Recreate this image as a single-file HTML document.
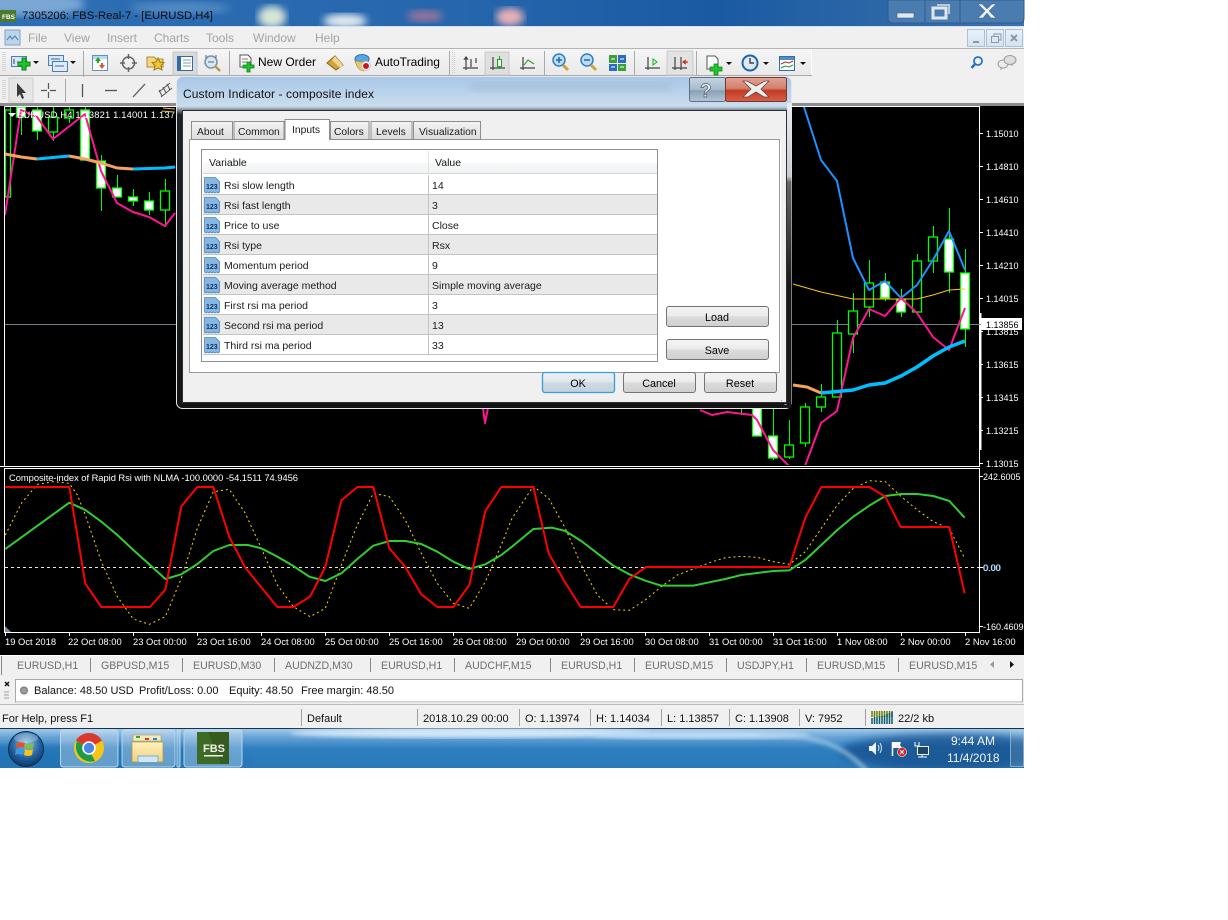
<!DOCTYPE html>
<html>
<head>
<meta charset="utf-8">
<title>Custom Indicator - composite index</title>
<style>
html,body{margin:0;padding:0;background:#fff;width:1228px;height:920px;overflow:hidden}
svg{display:block}
text{font-family:"Liberation Sans",sans-serif;white-space:pre}
.m{font-size:12px;fill:#a3a3a3}
.t{font-size:12px;fill:#000}
.d{font-size:10.500px;fill:#1a1a1a}
.tt{font-size:10.300px;fill:#1a1a1a}
.c{font-size:9px;fill:#fff}
.x{font-size:9.400px;fill:#fff}
.tb{font-size:10.600px;fill:#6e6e6e}
.st{font-size:11px;fill:#111}
.bt{font-size:10.800px;fill:#000;text-anchor:middle}
</style>
</head>
<body>
<svg width="1228" height="920" viewBox="0 0 1228 920" xmlns="http://www.w3.org/2000/svg">
<defs>
<linearGradient id="tbar" x1="0" x2="1" y1="0" y2="0"><stop offset="0" stop-color="#2f6fb4"/><stop offset=".45" stop-color="#2566ad"/><stop offset=".7" stop-color="#1a5aa2"/><stop offset="1" stop-color="#3c72ac"/></linearGradient>
<linearGradient id="task" x1="0" x2="0" y1="0" y2="1"><stop offset="0" stop-color="#a9cdeb"/><stop offset=".22" stop-color="#6aa5d6"/><stop offset=".5" stop-color="#2f7fc0"/><stop offset="1" stop-color="#2a7ab8"/></linearGradient>
<linearGradient id="btn" x1="0" x2="0" y1="0" y2="1"><stop offset="0" stop-color="#f3f3f3"/><stop offset=".48" stop-color="#ebebeb"/><stop offset=".5" stop-color="#dcdcdc"/><stop offset="1" stop-color="#cfcfcf"/></linearGradient>
<linearGradient id="okb" x1="0" x2="0" y1="0" y2="1"><stop offset="0" stop-color="#e9f0f5"/><stop offset=".48" stop-color="#dfe8ef"/><stop offset=".5" stop-color="#cddae4"/><stop offset="1" stop-color="#c2d2de"/></linearGradient>
<linearGradient id="hdr" x1="0" x2="0" y1="0" y2="1"><stop offset="0" stop-color="#fff"/><stop offset=".5" stop-color="#fff"/><stop offset=".55" stop-color="#f6f7f8"/><stop offset="1" stop-color="#f2f3f4"/></linearGradient>
<linearGradient id="tab" x1="0" x2="0" y1="0" y2="1"><stop offset="0" stop-color="#f4f4f4"/><stop offset="1" stop-color="#dcdcdc"/></linearGradient>
<linearGradient id="dlg" x1="0" x2="0" y1="0" y2="1"><stop offset="0" stop-color="#a7c6e6"/><stop offset=".06" stop-color="#bed6ec"/><stop offset=".09" stop-color="#c9dcec"/><stop offset=".105" stop-color="#5f6a72"/><stop offset=".115" stop-color="#1e2226"/><stop offset="1" stop-color="#141414"/></linearGradient>
<linearGradient id="rgl" x1="0" x2="0" y1="0" y2="1"><stop offset="0" stop-color="#e8eef2"/><stop offset=".24" stop-color="#c8ccd0"/><stop offset=".26" stop-color="#666"/><stop offset=".6" stop-color="#181818"/><stop offset="1" stop-color="#181818"/></linearGradient>
<linearGradient id="cls" x1="0" x2="0" y1="0" y2="1"><stop offset="0" stop-color="#e2a294"/><stop offset=".45" stop-color="#d1806f"/><stop offset=".55" stop-color="#c53a22"/><stop offset="1" stop-color="#d9604a"/></linearGradient>
<linearGradient id="hlp" x1="0" x2="0" y1="0" y2="1"><stop offset="0" stop-color="#c4d4e2"/><stop offset=".5" stop-color="#a9bccc"/><stop offset=".55" stop-color="#8ba0b4"/><stop offset="1" stop-color="#b4c6d6"/></linearGradient>
<linearGradient id="mdi" x1="0" x2="0" y1="0" y2="1"><stop offset="0" stop-color="#e8f1f9"/><stop offset="1" stop-color="#d4e4f2"/></linearGradient>
<radialGradient id="orb" cx=".5" cy=".35" r=".7"><stop offset="0" stop-color="#8ec3e8"/><stop offset=".6" stop-color="#1f5f9e"/><stop offset="1" stop-color="#0e2f55"/></radialGradient>
<linearGradient id="fold" x1="0" x2="0" y1="0" y2="1"><stop offset="0" stop-color="#fff3c0"/><stop offset="1" stop-color="#f0cf78"/></linearGradient>
<linearGradient id="tool" x1="0" x2="0" y1="0" y2="1"><stop offset="0" stop-color="#f6f6f6"/><stop offset="1" stop-color="#e9e9e9"/></linearGradient>
<filter id="b4"><feGaussianBlur stdDeviation="4"/></filter>
<filter id="b2"><feGaussianBlur stdDeviation="2"/></filter>
<clipPath id="cm"><rect x="5" y="107" width="974" height="358"/></clipPath>
<clipPath id="cs"><rect x="5" y="469" width="974" height="163"/></clipPath>
<clipPath id="ctop"><rect x="0" y="0" width="1024" height="26"/></clipPath>
<clipPath id="ctask"><rect x="0" y="728" width="1024" height="40"/></clipPath>
<g id="i123"><path d="M.5 1.500h11l4 4v10.500l-1.500 1-1.500-1-1.500 1-1.500-1-1.500 1-1.500-1-1.500 1-1.500-1-1.500 1-1.500-1z" fill="#86b7e3" stroke="#4f86bd" stroke-width=".8"/><text x="2" y="13" style="font-size:7px;font-weight:bold;fill:#123560">123</text></g>
</defs>

<rect width="1228" height="920" fill="#fff"/>

<!-- app background -->
<rect x="0" y="0" width="1024" height="768" fill="#f0f0f0"/>

<!-- title bar -->
<rect x="0" y="0" width="1024" height="27" fill="url(#tbar)"/>
<g clip-path="url(#ctop)">
<ellipse cx="30" cy="4" rx="55" ry="12" fill="#8fb6de" filter="url(#b4)" opacity=".8"/>
<ellipse cx="272" cy="17" rx="14" ry="11" fill="#d8e6d8" filter="url(#b4)"/>
<ellipse cx="345" cy="21" rx="22" ry="7" fill="#e4ecf0" filter="url(#b4)"/>
<ellipse cx="425" cy="16" rx="18" ry="6" fill="#c67a96" filter="url(#b4)" opacity=".7"/>
<ellipse cx="510" cy="17" rx="14" ry="9" fill="#e8b0b8" filter="url(#b4)"/>
<ellipse cx="180" cy="8" rx="50" ry="6" fill="#6fa0d0" filter="url(#b4)" opacity=".6"/>
</g>
<rect x="0" y="26" width="1024" height="1.500" fill="#cfe0ee"/>
<rect x="0" y="10" width="16" height="12" fill="#4a7a30"/>
<text x="2" y="19" style="font-size:6.500px;font-weight:bold;fill:#fff">FBS</text>
<text x="22" y="19" style="font-size:11.300px;fill:#0b0b0b">7305206: FBS-Real-7 - [EURUSD,H4]</text>
<!-- window caption buttons -->
<path d="M888 0v18q0 5 5 5h126q5 0 5-5V0z" fill="#4a7caf" stroke="#2d5d90"/>
<path d="M925 0v23M960 0v23" stroke="#2d5d90"/>
<rect x="897" y="13" width="17" height="5" fill="#e4e8ec" stroke="#3a5f88" stroke-width=".6"/>
<rect x="933" y="8" width="13" height="10" fill="none" stroke="#dfe6ec" stroke-width="3"/>
<path d="M937 5h12v9" fill="none" stroke="#b8c8d8" stroke-width="2"/>
<path d="M982 4l5 5 5-5h4l-7 7 7 7h-5l-4-5-4 5h-5l7-7-7-7z" fill="#eef1f4" stroke="#34618f" stroke-width=".5"/>

<!-- menu -->
<rect x="0" y="27" width="1024" height="21" fill="#f0f0f0"/>
<rect x="5" y="30" width="15" height="15" fill="#bcd3ea" stroke="#7ea4c8"/>
<path d="M7 40l3-4 2 3 3-3 3 4" fill="none" stroke="#4a78a8"/>
<text class="m" x="28" y="42">File</text><text class="m" x="64" y="42">View</text><text class="m" x="107" y="42">Insert</text><text class="m" x="154" y="42">Charts</text><text class="m" x="206" y="42">Tools</text><text class="m" x="253" y="42">Window</text><text class="m" x="315" y="42">Help</text>
<g stroke="#a9c1d8" fill="url(#mdi)"><rect x="967.500" y="29.500" width="17" height="17"/><rect x="986.500" y="29.500" width="17" height="17"/><rect x="1005.500" y="29.500" width="17" height="17"/></g>
<path d="M973 42h6" stroke="#8a98a8" stroke-width="2"/>
<path d="M991.500 36.500h7v6h-7zM994 36v-2h7v6h-2" fill="none" stroke="#8a98a8"/>
<path d="M1011 35l6 6M1017 35l-6 6" stroke="#8a98a8" stroke-width="2"/>
<rect x="0" y="48" width="1024" height="1" fill="#b4b4b4"/>

<!-- toolbars -->
<rect x="0" y="49" width="812" height="26" fill="url(#tool)"/>
<path d="M811.500 49v26.500H0" fill="none" stroke="#fff"/>
<rect x="0" y="75" width="812" height="1" fill="#aaa"/>
<rect x="0" y="76" width="180" height="28" fill="#efefef"/>
<rect x="780" y="76" width="244" height="28" fill="#f0f0f0"/>
<rect x="0" y="103" width="1024" height="3" fill="#8d8d8d"/>
<path d="M3 52v20M5 52v20" stroke="#bbb" stroke-dasharray="1 1"/>
<path d="M3 80v20M5 80v20" stroke="#bbb" stroke-dasharray="1 1"/>

<!-- toolbar 1 icons -->
<rect x="11.500" y="56.500" width="15" height="10" fill="#d6e6f4" stroke="#4a7fb0"/>
<path d="M14 59v5M17 62h6" stroke="#345" />
<path d="M22 58h4v4h4v4h-4v4h-4v-4h-4v-4h4z" fill="#1fc62a" stroke="#0d7a18"/>
<path d="M33 61h6l-3 3z" fill="#111"/>
<rect x="48.500" y="55.500" width="15" height="10" fill="#d6e6f4" stroke="#4a7fb0"/>
<rect x="52.500" y="61.500" width="15" height="10" fill="#dcebf7" stroke="#4a7fb0"/>
<path d="M51 59h9M55 66h9" stroke="#567"/>
<path d="M70 61h6l-3 3z" fill="#111"/>
<path d="M83.500 51v26" stroke="#aaa"/>
<rect x="92.500" y="55.500" width="15" height="15" fill="#fff" stroke="#5d93c4"/>
<rect x="93" y="56" width="14" height="3" fill="#bcd7ee"/>
<path d="M95 61l3-4 3 4h-2v2h-2v-2z" fill="#1bab22"/>
<path d="M99 65l3 4 3-4h-2v-2h-2v2z" fill="#dd5530"/>
<circle cx="128.500" cy="63" r="6" fill="none" stroke="#666" stroke-width="1.500"/>
<path d="M128.500 54v5M128.500 67v5M120 63h5M132 63h5" stroke="#666" stroke-width="1.500"/>
<path d="M147 57h7l2 2h7v8h-16z" fill="#f6d67c" stroke="#b08a38"/>
<path d="M158 58l2 4 4 .5-3 3 1 4.500-4-2-4 2 1-4.500-3-3 4-.5z" fill="#f2c531" stroke="#a07a16"/>
<rect x="173" y="52" width="24" height="23" fill="#dadada" stroke="#c6c6c6"/>
<rect x="177.500" y="56.500" width="15" height="14" fill="#fff" stroke="#2e6da8"/>
<rect x="177" y="56" width="4" height="15" fill="#2e6da8"/>
<path d="M183 60h8M183 63h8M183 66h8" stroke="#7aa0c4"/>
<circle cx="211" cy="62" r="6" fill="#d8e6f2" stroke="#7590aa" stroke-width="1.500"/>
<path d="M206 58v-3M216 58v-3M208 62h6" stroke="#567"/>
<path d="M215 66l5 5" stroke="#b89a40" stroke-width="2.500"/>
<path d="M229.500 51v26" stroke="#aaa"/>
<path d="M240 55h8l3 3v9h-11z" fill="#fff" stroke="#555"/>
<path d="M242 59h6M242 62h6" stroke="#777"/>
<path d="M247 62h3v3h4v3h-4v4h-3v-4h-4v-3h4z" fill="#1fc62a" stroke="#0d7a18" stroke-width=".8"/>
<text class="t" x="258" y="66">New Order</text>
<path d="M327 63l8-7 8 9-7 5z" fill="#d3a03a" stroke="#8b6414"/>
<path d="M335 56l8 9-3 3-8-8z" fill="#f0d590"/>
<ellipse cx="362" cy="59" rx="7" ry="4.500" fill="#5ba6de" stroke="#2b6ea8"/>
<path d="M355 61c2 6 4 10 9 10l4-8z" fill="#e8c76a" stroke="#a88a30" stroke-width=".6"/>
<circle cx="366" cy="66" r="4.500" fill="#fff" stroke="#c9c9c9"/>
<circle cx="366" cy="66" r="3" fill="#d41414"/>
<text class="t" x="375" y="66">AutoTrading</text>
<path d="M449.500 51v26" stroke="#aaa"/>
<path d="M452.500 52v22M454.500 52v22" stroke="#ccc" stroke-dasharray="1 1"/>
<g fill="none" stroke="#444" stroke-width="1.200">
<path d="M466 57v13M463 68h15M471 59v8M476 58v5"/>
<path d="M466 57l-1.500 2h3z" fill="#444"/>
</g>
<rect x="485" y="52" width="24" height="23" fill="#dfdfdf" stroke="#c8c8c8"/>
<path d="M493 57v13M490 68h15" stroke="#444" stroke-width="1.200" fill="none"/>
<rect x="497.500" y="59.500" width="4" height="7" fill="#fff" stroke="#12a81a"/>
<path d="M499.500 56v3M499.500 66v3" stroke="#12a81a"/>
<g fill="none" stroke="#444" stroke-width="1.200"><path d="M523 57v13M520 68h15"/></g>
<path d="M524 65l4-5 3 2 3 2" fill="none" stroke="#3a9a40" stroke-width="1.200"/>
<path d="M544.500 51v26" stroke="#aaa"/>
<circle cx="559" cy="60" r="6" fill="#bcdcf2" stroke="#2f80c0" stroke-width="1.500"/>
<path d="M556 60h6M559 57v6" stroke="#1f66a8" stroke-width="1.500"/>
<path d="M563 65l5 5" stroke="#c9a63c" stroke-width="3"/>
<circle cx="587" cy="60" r="6" fill="#bcdcf2" stroke="#2f80c0" stroke-width="1.500"/>
<path d="M584 60h6" stroke="#1f66a8" stroke-width="1.500"/>
<path d="M591 65l5 5" stroke="#c9a63c" stroke-width="3"/>
<rect x="609" y="55" width="8" height="8" fill="#3ba035"/><rect x="618" y="55" width="8" height="8" fill="#2a6cc4"/>
<rect x="609" y="64" width="8" height="7" fill="#2a6cc4"/><rect x="618" y="64" width="8" height="7" fill="#3ba035"/>
<path d="M611 59h4M620 59h4M611 67h4M620 67h4" stroke="#fff"/>
<path d="M634.500 51v26" stroke="#aaa"/>
<path d="M648 57v13M645 68h15" stroke="#444" stroke-width="1.200" fill="none"/>
<path d="M653 59l4 3-4 3z" fill="none" stroke="#15b020"/>
<rect x="667" y="51" width="26" height="24" fill="#e2e2e2" stroke="#c8c8c8"/>
<path d="M675 57v13M672 68h15M681 57v13" stroke="#444" stroke-width="1.200" fill="none"/>
<path d="M683 62h5M686 60l-3 2 3 2" fill="none" stroke="#c92a18" stroke-width="1.200"/>
<path d="M696.500 51v26" stroke="#aaa"/>
<path d="M707 56h8l3 3v10h-11z" fill="#fff" stroke="#555"/>
<path d="M714 64h4v3h4v4h-4v4h-4v-4h-4v-4h4z" fill="#1fc62a" stroke="#0d7a18" stroke-width=".7"/>
<path d="M726 62h6l-3 3z" fill="#111"/>
<circle cx="750" cy="63" r="7.500" fill="#dfe9f2" stroke="#1d64ab" stroke-width="2"/>
<path d="M750 58v5h4" fill="none" stroke="#223" stroke-width="1.200"/>
<path d="M763 62h6l-3 3z" fill="#111"/>
<rect x="779.500" y="56.500" width="15" height="14" fill="#f8fbfd" stroke="#2e6da8"/>
<rect x="780" y="57" width="14" height="3" fill="#4f8ecb"/>
<path d="M781 64l4-2 4 1 4-2" fill="none" stroke="#b03020"/>
<path d="M781 68l4-2 4 1 4-2" fill="none" stroke="#2a9a30"/>
<path d="M800 62h6l-3 3z" fill="#111"/>
<circle cx="978" cy="61" r="4" fill="none" stroke="#2a72c4" stroke-width="1.800"/>
<path d="M975 64l-3.500 4" stroke="#2a72c4" stroke-width="2.500"/>
<ellipse cx="1003" cy="64" rx="5" ry="4" fill="#eee" stroke="#9a9a9a"/>
<ellipse cx="1010" cy="60" rx="6" ry="4.500" fill="#ddd" stroke="#9a9a9a"/>
<path d="M1001 68v2M1012 64v2" stroke="#9a9a9a"/>

<!-- toolbar 2 -->
<rect x="9" y="78" width="24" height="24" fill="#e6e6e6" stroke="#cfcfcf"/>
<path d="M17 83v14l3-3 2 5 2-1-2-5h4z" fill="#3a3a3a"/>
<path d="M48.500 83v6M48.500 92v6M41 90.500h6M50 90.500h6" stroke="#555" stroke-width="1.200"/>
<path d="M65.500 79v23" stroke="#aaa"/>
<path d="M82.500 84v13" stroke="#555" stroke-width="1.300"/>
<path d="M105 90.500h12" stroke="#555" stroke-width="1.300"/>
<path d="M133 97l12-13" stroke="#666" stroke-width="1.300"/>
<path d="M159 92l11-9M161 97l11-9M162 96l-3-6M166 93l-3-6M170 90l-3-6" stroke="#555" stroke-width="1"/>

<!-- chart background -->
<rect x="0" y="106" width="1024" height="549" fill="#000"/>
<path d="M4.500 106.500h975v360M4.500 106.500v360" fill="none" stroke="#fff"/>
<path d="M0 466.500h980M4 468.500h976" stroke="#fff"/>
<path d="M4.500 468v164.500h975V468" fill="none" stroke="#fff"/>

<!-- main chart -->
<g clip-path="url(#cm)">
<path d="M5 324.500h974" stroke="#6e7d8c"/>
<path shape-rendering="crispEdges" stroke="#00ff00" fill="none" d="M10.500 107v90M21.500 107v28M37.500 107v33M53.500 107v34M69.500 107v16M85.500 107v3M101.500 155v56M117.500 175v22M133.500 189v17M149.500 192v23M165.500 179v48M741.500 395v20M757.500 400v10M773.500 400v60M789.500 420v39M805.500 403v44M821.500 384v28M837.500 320v77M853.500 293v60M869.500 260v57M885.500 273v28M901.500 289v28M917.500 254v58M933.500 226v47M949.500 208v85M965.500 249v98"/>
<g stroke="#00ff00" stroke-width="1.300" fill="#000">
<rect x="5.500" y="110" width="5" height="87"/>
<rect x="16.500" y="107" width="9" height="10" fill="#fff"/>
<rect x="32.500" y="110" width="9" height="21" fill="#fff"/>
<rect x="48.500" y="117" width="9" height="15"/>
<rect x="64.500" y="110" width="9" height="8"/>
<rect x="80.500" y="110" width="9" height="50" fill="#fff"/>
<rect x="96.500" y="161" width="9" height="27" fill="#fff"/>
<rect x="112.500" y="188" width="9" height="9" fill="#fff"/>
<rect x="128.500" y="197" width="9" height="4" fill="#fff"/>
<rect x="144.500" y="201" width="9" height="9" fill="#fff"/>
<rect x="160.500" y="191" width="9" height="19"/>
<rect x="752.500" y="408" width="9" height="28" fill="#fff"/>
<rect x="768.500" y="436" width="9" height="22" fill="#fff"/>
<rect x="784.500" y="445" width="9" height="12"/>
<rect x="800.500" y="407" width="9" height="36"/>
<rect x="816.500" y="397" width="9" height="10"/>
<rect x="832.500" y="333" width="9" height="64"/>
<rect x="848.500" y="311" width="9" height="23"/>
<rect x="864.500" y="283" width="9" height="24"/>
<rect x="880.500" y="282" width="9" height="16" fill="#fff"/>
<rect x="896.500" y="299" width="9" height="13" fill="#fff"/>
<rect x="912.500" y="261" width="9" height="51"/>
<rect x="928.500" y="237" width="9" height="24"/>
<rect x="944.500" y="239" width="9" height="33" fill="#fff"/>
<rect x="960.500" y="273" width="9" height="56" fill="#fff"/>
</g>
<g fill="none" stroke-linejoin="round">
<polyline points="793,284 821,292 853,299 901,299 917,299 933,295 949,290 965,289" stroke="#ffc800"/>
<polyline points="804,107 821,160 837,181 853,258 869,290 885,281 901,298 917,285 933,260 949,231 965,270" stroke="#1e90ff" stroke-width="2"/>
<polyline points="5,215 21,110 37,117 53,139 85,114 101,171 117,203 133,212 149,217 165,226 175,213" stroke="#ff1493" stroke-width="2"/>
<polyline points="483,408 485,423 488,408" stroke="#ff1493" stroke-width="2"/>
<polyline points="700,410 712,415 727,412 752,415 757,420 773,450 789,466" stroke="#ff1493" stroke-width="2"/>
<polyline points="805,466 821,423 837,411 853,338 869,309 885,316 901,298 917,313 933,337 949,350 965,308" stroke="#ff1493" stroke-width="2"/>
<polyline points="5,154 21,157 37,159" stroke="#f4a460" stroke-width="3"/>
<polyline points="37,159 69,156" stroke="#00bfff" stroke-width="3"/>
<polyline points="69,156 85,159 101,163 117,168 133,169" stroke="#f4a460" stroke-width="3"/>
<polyline points="133,169 165,168 175,167" stroke="#00bfff" stroke-width="3"/>
<polyline points="793,385 807,387 821,393" stroke="#f4a460" stroke-width="3"/>
<polyline points="821,393 853,390 869,385 885,383 901,376 917,367 933,356 949,347 965,341" stroke="#00bfff" stroke-width="3.500"/>
</g>
</g>
<path d="M8 113h8l-4 4z" fill="#fff"/>
<text class="x" x="17" y="118" textLength="158">EURUSD,H4 1.13821 1.14001 1.137</text>
<path d="M162 111l12 1M163 108l12 1" stroke="#e8c040"/>

<!-- price axis -->
<rect x="979" y="313" width="2.500" height="137" fill="#fff"/>
<path d="M980 133.500h3M980 166.500h3M980 199.500h3M980 232.500h3M980 265.500h3M980 298.500h3M980 331.500h3M980 364.500h3M980 397.500h3M980 430.500h3M980 463.500h3" stroke="#fff"/>
<g>
<text class="c" x="986" y="137">1.15010</text><text class="c" x="986" y="170">1.14810</text><text class="c" x="986" y="203">1.14610</text><text class="c" x="986" y="236">1.14410</text><text class="c" x="986" y="269">1.14210</text><text class="c" x="986" y="302">1.14015</text><text class="c" x="986" y="335">1.13815</text><text class="c" x="986" y="368">1.13615</text><text class="c" x="986" y="401">1.13415</text><text class="c" x="986" y="434">1.13215</text><text class="c" x="986" y="467">1.13015</text>
</g>
<rect x="981" y="318" width="41" height="12" fill="#fff"/>
<text x="986" y="328" style="font-size:9px;fill:#000">1.13856</text>
<path d="M978 324.500h3" stroke="#7a8a9a"/>

<!-- sub chart -->
<path d="M5 567.500h974" stroke="#e8e8e8" stroke-dasharray="3 3"/>
<g clip-path="url(#cs)">
<g transform="translate(0,465) scale(.33333)" fill="none" stroke-linejoin="round">
<polyline stroke="#ffd700" stroke-width="3" stroke-dasharray="6 9" points="16,210 64,115 112,58 160,50 208,55 232,90 256,150 304,290 352,395 400,462 448,478 496,455 544,340 592,190 640,80 688,73 736,145 784,250 832,360 880,425 930,455 976,430 1024,300 1072,180 1120,85 1168,95 1216,165 1264,265 1312,355 1360,415 1408,430 1456,350 1504,240 1536,160 1600,64 1646,100 1696,190 1744,300 1792,390 1840,434 1888,436 1936,405 1984,365 2032,330 2080,312 2128,293 2176,278 2224,274 2272,277 2320,290 2368,298 2416,260 2464,190 2512,120 2560,70 2608,47 2656,50 2704,95 2752,135 2800,170 2848,190 2894,280"/>
<polyline stroke="#32cd32" stroke-width="6" points="16,252 208,113 256,135 304,170 352,210 400,255 448,298 496,342 544,328 592,297 640,258 688,240 744,240 784,250 832,275 880,303 928,335 976,348 1024,325 1072,282 1120,242 1168,228 1216,228 1264,237 1312,260 1360,290 1408,312 1456,298 1504,270 1536,245 1600,192 1656,188 1696,198 1744,228 1792,265 1840,302 1888,328 1936,347 1984,362 2080,362 2128,352 2176,342 2224,330 2272,324 2320,318 2368,316 2416,285 2464,240 2512,195 2560,155 2608,122 2656,93 2704,87 2752,87 2800,93 2848,108 2894,158"/>
<polyline stroke="#ff0000" stroke-width="6" points="16,66 208,66 256,356 304,426 450,426 496,374 544,124 592,66 640,66 688,216 736,308 832,426 880,426 930,395 976,306 1024,106 1072,66 1120,66 1168,250 1216,306 1264,388 1312,426 1360,426 1408,360 1456,138 1504,66 1600,66 1646,265 1694,350 1742,426 1840,426 1888,342 1938,306 2368,306 2416,158 2464,66 2608,66 2656,95 2702,186 2848,186 2894,385"/>
</g>
</g>
<text class="x" x="9" y="481" textLength="289">Composite-index of Rapid Rsi with NLMA -100.0000 -54.1511 74.9456</text>
<path d="M5 626l6 6H5z" fill="#7a8a9c"/>
<path d="M980 476.500h3M980 567.500h3M980 626.500h3" stroke="#fff"/>
<text class="c" x="983" y="480">242.6005</text>
<text x="983.700" y="571" style="font-size:9px;fill:#2a7fd4">0.00</text>
<text class="c" x="983" y="571">0.00</text>
<text class="c" x="983" y="630">-160.4609</text>
<path d="M5.500 633v3M69.500 633v3M133.500 633v3M197.500 633v3M261.500 633v3M325.500 633v3M389.500 633v3M453.500 633v3M517.500 633v3M581.500 633v3M645.500 633v3M709.500 633v3M773.500 633v3M837.500 633v3M901.500 633v3M965.500 633v3" stroke="#fff"/>
<g>
<text class="x" x="5" y="645">19 Oct 2018</text><text class="x" x="68" y="645">22 Oct 08:00</text><text class="x" x="133" y="645">23 Oct 00:00</text><text class="x" x="197" y="645">23 Oct 16:00</text><text class="x" x="261" y="645">24 Oct 08:00</text><text class="x" x="325" y="645">25 Oct 00:00</text><text class="x" x="389" y="645">25 Oct 16:00</text><text class="x" x="453" y="645">26 Oct 08:00</text><text class="x" x="516" y="645">29 Oct 00:00</text><text class="x" x="580" y="645">29 Oct 16:00</text><text class="x" x="645" y="645">30 Oct 08:00</text><text class="x" x="709" y="645">31 Oct 00:00</text><text class="x" x="773" y="645">31 Oct 16:00</text><text class="x" x="837" y="645">1 Nov 08:00</text><text class="x" x="900" y="645">2 Nov 00:00</text><text class="x" x="965" y="645">2 Nov 16:00</text>
</g>

<!-- tabs bar -->
<rect x="0" y="655" width="1024" height="21" fill="#f0f0f0"/>
<path d="M0 655.500h991" stroke="#fff"/>
<path d="M1.500 656v19" stroke="#888"/>
<path d="M90.500 658v14M182.500 658v14M274.500 658v14M370.500 658v14M454.500 658v14M550.500 658v14M634.500 658v14M726.500 658v14M806.500 658v14M898.500 658v14" stroke="#888"/>
<text class="tb" x="17" y="669">EURUSD,H1</text><text class="tb" x="101" y="669">GBPUSD,M15</text><text class="tb" x="193" y="669">EURUSD,M30</text><text class="tb" x="285" y="669">AUDNZD,M30</text><text class="tb" x="381" y="669">EURUSD,H1</text><text class="tb" x="465" y="669">AUDCHF,M15</text><text class="tb" x="561" y="669">EURUSD,H1</text><text class="tb" x="645" y="669">EURUSD,M15</text><text class="tb" x="737" y="669">USDJPY,H1</text><text class="tb" x="817" y="669">EURUSD,M15</text><text class="tb" x="909" y="669">EURUSD,M15</text>
<path d="M994 661v7l-4-3.500z" fill="#999"/>
<path d="M1010 661v7l4-3.500z" fill="#111"/>
<rect x="0" y="675" width="1024" height="30" fill="#f0f0f0"/>

<!-- terminal -->
<rect x="15.500" y="679.500" width="1007" height="22.500" fill="#fff" stroke="#a8a8a8"/>
<path d="M16 702.500h1007" stroke="#dcdcdc"/>
<path d="M5 682l4 4M9 682l-4 4" stroke="#111" stroke-width="1.500"/>
<path d="M4 692h5M4 695h5M4 698h5" stroke="#a0a0a0"/>
<circle cx="24" cy="690.500" r="3.500" fill="#9a9a9a" stroke="#777"/>
<text class="st" x="34" y="694">Balance: 48.50 USD</text><text class="st" x="139" y="694">Profit/Loss: 0.00</text><text class="st" x="229" y="694">Equity: 48.50</text><text class="st" x="301" y="694">Free margin: 48.50</text>

<!-- status -->
<rect x="0" y="704" width="1024" height="24" fill="#f0f0f0"/>
<path d="M0 704.500h1024" stroke="#bdbdbd"/>
<path d="M301.500 709v17M417.500 709v17M519.500 709v17M590.500 709v17M661.500 709v17M729.500 709v17M799.500 709v17M865.500 709v17" stroke="#a0a0a0"/>
<text class="st" x="2" y="722">For Help, press F1</text><text class="st" x="307" y="722">Default</text><text class="st" x="423" y="722">2018.10.29 00:00</text><text class="st" x="525" y="722">O: 1.13974</text><text class="st" x="596" y="722">H: 1.14034</text><text class="st" x="667" y="722">L: 1.13857</text><text class="st" x="735" y="722">C: 1.13908</text><text class="st" x="805" y="722">V: 7952</text><text class="st" x="898" y="722">22/2 kb</text>
<g stroke-width="1.500">
<path d="M872 711v6M874.500 711v6M877 711v6M879.500 711v6M882 711v6M884.500 711v6M887 711v6M889.500 711v6M892 711v6" stroke="#6b7d0a"/>
<path d="M872 718v6M874.500 717v7M877 717v7M879.500 716v8M882 716v8M884.500 715v9M887 714v10M889.500 713v11M892 712v12" stroke="#0b5a6e"/>
</g>

<!-- taskbar -->
<rect x="0" y="728" width="1024" height="40" fill="url(#task)"/>
<rect x="0" y="728" width="1024" height="1" fill="#16324e"/>
<g clip-path="url(#ctask)">
<ellipse cx="0" cy="760" rx="250" ry="14" fill="#1e70b0" filter="url(#b4)" opacity=".6"/>
<ellipse cx="470" cy="733" rx="180" ry="5" fill="#d2e6f8" filter="url(#b2)"/>
<ellipse cx="700" cy="735" rx="110" ry="4" fill="#c0dcf4" filter="url(#b2)"/>
<ellipse cx="950" cy="752" rx="110" ry="18" fill="#14508c" filter="url(#b4)" opacity=".75"/>
<path d="M760 735c60-3 90 15 110 40" stroke="#a8cce8" stroke-width="3" fill="none" filter="url(#b2)"/>
</g>
<circle cx="26" cy="749" r="17.500" fill="url(#orb)" stroke="#0f2f50"/>
<path d="M17 743q4-2 8 0l-1 5q-4-2-8 0z" fill="#e8522a"/>
<path d="M26 743q4 2 8 0l-1 5q-4 2-8 0z" fill="#7cc142"/>
<path d="M16 749q4-2 8 0l-1 6q-4-2-8 0z" fill="#3b9ae0"/>
<path d="M25 749q4 2 8 0l-1 6q-4 2-8 0z" fill="#f6c21c"/>
<ellipse cx="26" cy="738" rx="12" ry="5" fill="#fff" opacity=".25"/>
<g stroke="#b6d8ee" fill="#fff" fill-opacity=".3">
<rect x="60.500" y="729.500" width="57.500" height="37.500" rx="3"/>
<rect x="122" y="729.500" width="53" height="37.500" rx="3"/>
<rect x="177" y="729.500" width="3" height="37.500" rx="1"/>
<rect x="184" y="729.500" width="58" height="37.500" rx="3"/>
</g>
<circle cx="89" cy="748" r="15" fill="#f5c518"/>
<path d="M89 748L76 740.500A15 15 0 0 1 102 740.500z" fill="#d93a2f"/>
<path d="M77 741l11 7 7 13a15 15 0 0 1-18 -20z" fill="#1c9b48"/>
<circle cx="89" cy="748" r="6.800" fill="#fff"/>
<circle cx="89" cy="748" r="5.200" fill="#4a88e8"/>
<rect x="133" y="735" width="28" height="6" fill="#f4e9b8" stroke="#b89a50" stroke-width=".6"/>
<rect x="136" y="736" width="4" height="2" fill="#2ba838"/><rect x="145" y="738" width="4" height="2" fill="#d33a28"/><rect x="153" y="738" width="4" height="2" fill="#2a80d8"/>
<path d="M132 742h31v20h-31z" fill="url(#fold)" stroke="#b4964c" stroke-width=".8"/>
<path d="M138 762v-6h20v6" fill="#cfe6f6" stroke="#7ab0d8"/>
<rect x="197" y="732" width="32" height="32" fill="#3f6a25"/>
<path d="M208 732h21v32h-8z" fill="#2f521a" opacity=".6"/>
<text x="203" y="752" style="font-size:11px;font-weight:bold;fill:#f2f2ea">FBS</text>
<rect x="204" y="755" width="19" height="1.500" fill="#f2f2ea"/>
<path d="M869 746h3l4-4v13l-4-4h-3z" fill="#eef3f8"/>
<path d="M878 745q2 3 0 6M880 743q3 5 0 10" fill="none" stroke="#dce8f2"/>
<path d="M892.500 742v14" stroke="#fff" stroke-width="1.500"/>
<path d="M893 742h8l-1 3 2 3h-9z" fill="#fff"/>
<circle cx="902" cy="752" r="4.500" fill="#d82020" stroke="#fff" stroke-width=".6"/>
<path d="M900 750l4 4M904 750l-4 4" stroke="#fff"/>
<rect x="917.500" y="746.500" width="11" height="8" fill="#224466" stroke="#f0f4f8"/>
<path d="M915 742v4h4v-4M922 755v2M918 757h9" fill="none" stroke="#fff"/>
<text x="951" y="745" style="font-size:12px;fill:#f2f6fa">9:44 AM</text>
<text x="947" y="762" style="font-size:12px;fill:#f2f6fa">11/4/2018</text>
<rect x="1010.500" y="729.500" width="13" height="37" fill="#fff" fill-opacity=".12" stroke="#a8c4dc" stroke-opacity=".7"/>

<!-- dialog -->
<rect x="176.500" y="76.500" width="615" height="332" rx="6" fill="url(#dlg)" stroke="#e4e8ec"/>
<rect x="787" y="103" width="4.500" height="305" fill="url(#rgl)"/>
<g filter="url(#b4)" opacity=".18">
<rect x="470" y="82" width="200" height="10" fill="#7d90a4"/>
</g>
<text x="183" y="98" style="font-size:12px;fill:#111" textLength="191">Custom Indicator - composite index</text>
<rect x="689.500" y="77.500" width="36" height="24" rx="2" fill="url(#hlp)" stroke="#5f6f80"/>
<rect x="725.500" y="77.500" width="61" height="24" rx="2" fill="url(#cls)" stroke="#6b3a30"/>
<text x="700" y="97" style="font-size:19px;font-weight:bold;fill:#eef2f6;stroke:#4a5a6a;stroke-width:.7">?</text>
<path d="M747 81l9 5 9-5h4l-8 8 8 8h-5l-8-5-8 5h-5l8-8-8-8z" fill="#eee" stroke="#6a4a40" stroke-width=".8"/>
<rect x="182.500" y="110.500" width="604" height="292" fill="#f0f0f0" stroke="#2f2f2f"/>
<path d="M784.500 404.500h2M781 400.500h1" stroke="#aaa"/>
<rect x="189.500" y="139.500" width="590" height="233" fill="#fff" stroke="#9a9a9a"/>
<path d="M780.500 140v233" stroke="#fff"/>
<g stroke="#8e8e8e" fill="url(#tab)">
<rect x="191.500" y="121.500" width="41" height="18"/>
<rect x="234" y="121.500" width="50" height="18"/>
<rect x="330.500" y="121.500" width="38.500" height="18"/>
<rect x="371" y="121.500" width="41" height="18"/>
<rect x="413.500" y="121.500" width="67" height="18"/>
</g>
<path d="M285 140v-20.500h44.500V140" fill="#fff" stroke="#8e8e8e"/>
<rect x="285.500" y="139" width="43.500" height="2" fill="#fff"/>
<text class="tt" x="197" y="135">About</text><text class="tt" x="238" y="135">Common</text><text class="tt" x="292" y="133">Inputs</text><text class="tt" x="334" y="135">Colors</text><text class="tt" x="376" y="135">Levels</text><text class="tt" x="419" y="135">Visualization</text>

<!-- table -->
<rect x="201.500" y="149.500" width="456" height="212" fill="#fff" stroke="#8f8f8f"/>
<rect x="203" y="151" width="454" height="23" fill="url(#hdr)"/>
<path d="M203 173.500h454" stroke="#d6d6d6"/>
<path d="M428.500 151v23" stroke="#e2e2e2"/>
<text class="d" x="209" y="166">Variable</text><text class="d" x="435" y="166">Value</text>
<g fill="#e9e9e9"><rect x="203" y="195" width="454" height="19"/><rect x="203" y="235" width="454" height="19"/><rect x="203" y="275" width="454" height="19"/><rect x="203" y="315" width="454" height="19"/></g>
<path d="M203 194.500h454M203 214.500h454M203 234.500h454M203 254.500h454M203 274.500h454M203 294.500h454M203 314.500h454M203 334.500h454M203 354.500h454" stroke="#c4c4c4"/>
<path d="M428.500 175v180" stroke="#c4c4c4"/>
<use href="#i123" x="204" y="176"/><use href="#i123" x="204" y="196"/><use href="#i123" x="204" y="216"/><use href="#i123" x="204" y="236"/><use href="#i123" x="204" y="256"/><use href="#i123" x="204" y="276"/><use href="#i123" x="204" y="296"/><use href="#i123" x="204" y="316"/><use href="#i123" x="204" y="336"/>
<text class="d" x="224" y="189">Rsi slow length</text><text class="d" x="432" y="189">14</text>
<text class="d" x="224" y="209">Rsi fast length</text><text class="d" x="432" y="209">3</text>
<text class="d" x="224" y="229">Price to use</text><text class="d" x="432" y="229">Close</text>
<text class="d" x="224" y="249">Rsi type</text><text class="d" x="432" y="249">Rsx</text>
<text class="d" x="224" y="269">Momentum period</text><text class="d" x="432" y="269">9</text>
<text class="d" x="224" y="289">Moving average method</text><text class="d" x="432" y="289">Simple moving average</text>
<text class="d" x="224" y="309">First rsi ma period</text><text class="d" x="432" y="309">3</text>
<text class="d" x="224" y="329">Second rsi ma period</text><text class="d" x="432" y="329">13</text>
<text class="d" x="224" y="349">Third rsi ma period</text><text class="d" x="432" y="349">33</text>

<!-- buttons -->
<g stroke="#747474" fill="url(#btn)">
<rect x="666.500" y="306.500" width="102" height="20" rx="2.500"/>
<rect x="666.500" y="339.500" width="102" height="20" rx="2.500"/>
<rect x="623.500" y="372.500" width="72" height="20" rx="2.500"/>
<rect x="704.500" y="372.500" width="72" height="20" rx="2.500"/>
</g>
<rect x="542.500" y="372.500" width="72" height="20" rx="2.500" fill="url(#okb)" stroke="#3c9dd0" stroke-width="1.300"/>
<text class="bt" x="717" y="321">Load</text>
<text class="bt" x="717" y="354">Save</text>
<text class="bt" x="578" y="387">OK</text>
<text class="bt" x="659" y="387">Cancel</text>
<text class="bt" x="740" y="387">Reset</text>
</svg>
</body>
</html>
